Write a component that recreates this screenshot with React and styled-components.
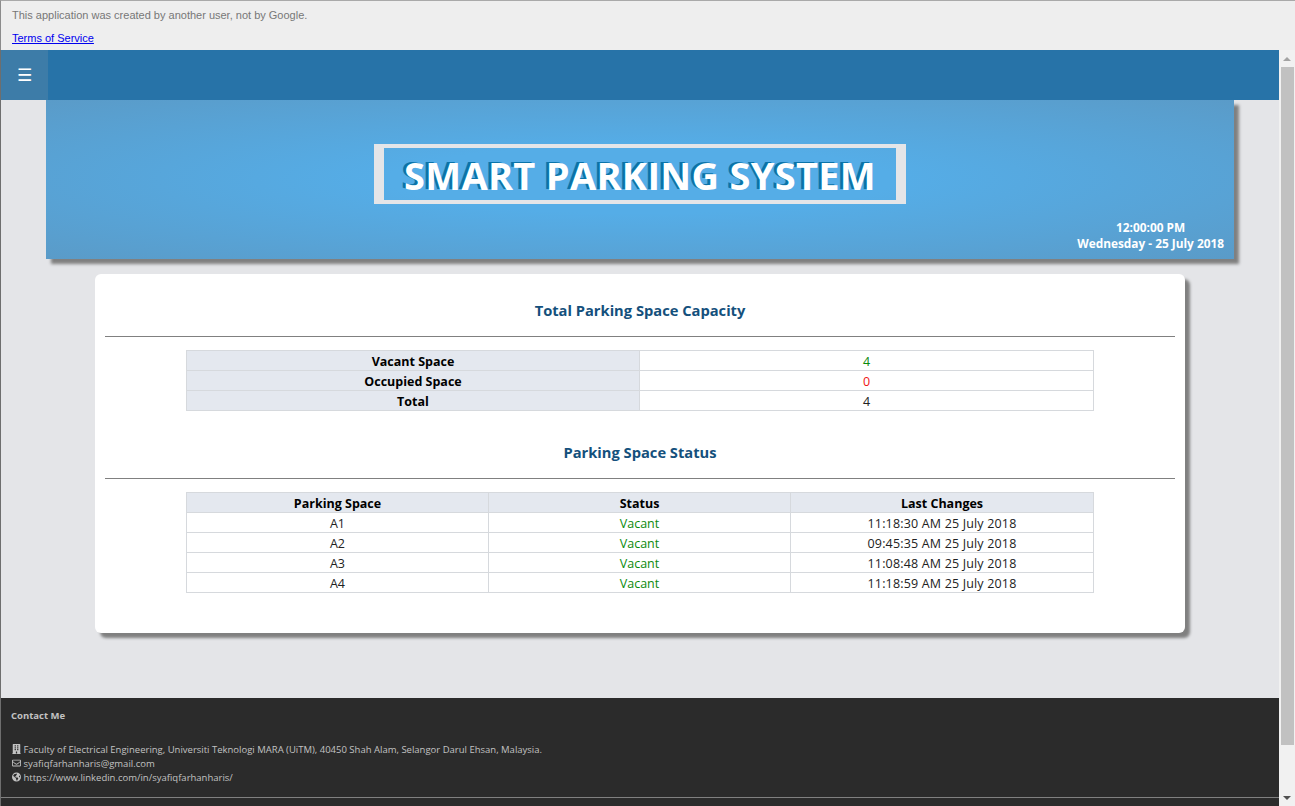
import styled, { createGlobalStyle } from "styled-components";
import { FaBuilding, FaRegEnvelope, FaGlobeAmericas } from "react-icons/fa";

const capacity = [
    { label: "Vacant Space", value: "4", tone: "#0b8a0b" },
    { label: "Occupied Space", value: "0", tone: "#f01414" },
    { label: "Total", value: "4", tone: "#222" },
];

const spaces = [
    { name: "A1", changed: "11:18:30 AM 25 July 2018" },
    { name: "A2", changed: "09:45:35 AM 25 July 2018" },
    { name: "A3", changed: "11:08:48 AM 25 July 2018" },
    { name: "A4", changed: "11:18:59 AM 25 July 2018" },
];

export default function App() {
    return (
        <>
            <GlobalStyle />
            <Shell>
                <Notice>
                    <NoticeText>This application was created by another user, not by Google.</NoticeText>
                    <NoticeLink href="#">Terms of Service</NoticeLink>
                </Notice>
                <Frame>
                    <Page>
                        <TopBar>
                            <MenuButton>☰</MenuButton>
                        </TopBar>
                        <Main>
                            <Header>
                                <TitleBox>SMART PARKING SYSTEM</TitleBox>
                                <Clock>
                                    <div>12:00:00 PM</div>
                                    <div>Wednesday - 25 July 2018</div>
                                </Clock>
                            </Header>
                            <Card>
                                <SectionTitle>Total Parking Space Capacity</SectionTitle>
                                <Rule />
                                <DataTable>
                                    <tbody>
                                        {capacity.map((row) => (
                                            <tr key={row.label}>
                                                <HeadCell $width="452px">{row.label}</HeadCell>
                                                <Cell $tone={row.tone}>{row.value}</Cell>
                                            </tr>
                                        ))}
                                    </tbody>
                                </DataTable>
                                <SectionTitle $second>Parking Space Status</SectionTitle>
                                <Rule />
                                <DataTable>
                                    <thead>
                                        <tr>
                                            <HeadCell $width="301px">Parking Space</HeadCell>
                                            <HeadCell $width="301px">Status</HeadCell>
                                            <HeadCell>Last Changes</HeadCell>
                                        </tr>
                                    </thead>
                                    <tbody>
                                        {spaces.map((space) => (
                                            <tr key={space.name}>
                                                <Cell>{space.name}</Cell>
                                                <Cell $tone="#0b8a0b">Vacant</Cell>
                                                <Cell $spaced>{space.changed}</Cell>
                                            </tr>
                                        ))}
                                    </tbody>
                                </DataTable>
                            </Card>
                        </Main>
                        <Footer>
                            <FooterTitle>Contact Me</FooterTitle>
                            <FooterLine><FaBuilding /> Faculty of Electrical Engineering, Universiti Teknologi MARA (UiTM), 40450 Shah Alam, Selangor Darul Ehsan, Malaysia.</FooterLine>
                            <FooterLine><FaRegEnvelope /> syafiqfarhanharis@gmail.com</FooterLine>
                            <FooterLine><FaGlobeAmericas /> https://www.linkedin.com/in/syafiqfarhanharis/</FooterLine>
                            <FooterRule />
                        </Footer>
                    </Page>
                    <Scrollbar>
                        <Arrow $up />
                        <Track>
                            <Thumb />
                        </Track>
                        <Arrow />
                    </Scrollbar>
                </Frame>
            </Shell>
        </>
    );
}

// STYLING
const GlobalStyle = createGlobalStyle`
    html, body {
        margin: 0;
        height: 100%;
        overflow: hidden;
    }
`;

const Shell = styled.div`
    display: flex;
    flex-direction: column;
    height: 806px;
    overflow: hidden;
    font-family: "Open Sans", sans-serif;
`;

const Notice = styled.div`
    height: 50px;
    box-sizing: border-box;
    flex: none;
    padding: 8px 12px 0 11px;
    background-color: #eeeeee;
    border-top: 1px solid #a9a9a9;
    border-left: 1px solid #8c8c8c;
    font-family: "Liberation Sans", Arial, sans-serif;
    font-size: 11px;
    line-height: 12px;
`;

const NoticeText = styled.div`
    color: #777777;
    margin-bottom: 11px;
`;

const NoticeLink = styled.a`
    color: #0000ee;
`;

const Frame = styled.div`
    display: flex;
    flex: 1;
    min-height: 0;
`;

const Page = styled.div`
    display: flex;
    flex-direction: column;
    width: 1278px;
    flex: none;
    background-color: #e4e5e8;
    border-left: 1px solid #6e6e6e;
`;

const TopBar = styled.div`
    position: relative;
    z-index: 2;
    display: flex;
    flex: none;
    height: 50px;
    background-color: #2773a8;
`;

const MenuButton = styled.div`
    width: 47px;
    display: flex;
    align-items: center;
    justify-content: center;
    color: #ffffff;
    background-color: #3d7ca8;
    font-family: "DejaVu Sans", sans-serif;
    font-size: 17px;
`;

const Main = styled.div`
    flex: 1;
    min-height: 0;
`;

const Header = styled.div`
    display: flex;
    flex-direction: column;
    align-items: center;
    box-sizing: border-box;
    height: 159px;
    margin: 0 45px;
    padding: 44px 10px 0;
    background: radial-gradient(ellipse at center, #55ade7 30%, #5a9bc8 100%);
    box-shadow: 5px 5px 3px #808080;
`;

const TitleBox = styled.div`
    box-sizing: border-box;
    width: 532px;
    height: 60px;
    padding-top: 2px;
    border: solid #e4e5e8;
    border-width: 4px 10px;
    display: flex;
    align-items: center;
    justify-content: center;
    color: #ffffff;
    font-size: 38px;
    font-weight: 700;
    letter-spacing: 0.3px;
    white-space: nowrap;
    text-shadow: -3px -1px 0 #0a73a9;
`;

const Clock = styled.div`
    align-self: flex-end;
    margin-top: 15px;
    color: #ffffff;
    font-size: 11.85px;
    font-weight: 700;
    line-height: 16px;
    text-align: center;
`;

const Card = styled.div`
    box-sizing: border-box;
    height: 359px;
    margin: 15px 94px 0;
    padding: 0 10px;
    background-color: #ffffff;
    border-radius: 6px;
    box-shadow: 5px 5px 3px #808080;
`;

const SectionTitle = styled.h2`
    margin: 0;
    padding-top: ${(props) => (props.$second ? "30px" : "25px")};
    height: 37px;
    color: #14507c;
    font-size: 14.7px;
    font-weight: 700;
    line-height: 22px;
    text-align: center;
`;

const Rule = styled.hr`
    margin: 0 0 13px;
    border: none;
    border-top: 1px solid #808080;
`;

const DataTable = styled.table`
    width: 908px;
    margin: 0 auto;
    border-collapse: collapse;
    table-layout: fixed;
    font-size: 12.5px;
    line-height: 17px;
    text-align: center;
`;

const HeadCell = styled.td`
    width: ${(props) => props.$width || "auto"};
    padding: 2px 0 0;
    border: 1px solid #d6d9dd;
    background-color: #e4e8ef;
    color: #000000;
    font-weight: 700;
`;

const Cell = styled.td`
    padding: 2px 0 0;
    border: 1px solid #d6d9dd;
    color: ${(props) => props.$tone || "#222222"};
    letter-spacing: ${(props) => (props.$spaced ? "0.17px" : "0")};
`;

const Footer = styled.div`
    position: relative;
    flex: none;
    box-sizing: border-box;
    height: 108px;
    padding: 11px 10px 0;
    background-color: #2b2b2b;
    color: #c2c2c2;
    font-size: 9.5px;
    line-height: 14px;

    svg {
        width: 9px;
        height: 10px;
        margin-left: 1px;
        vertical-align: -1px;
    }
`;

const FooterTitle = styled.div`
    font-weight: 700;
    margin-bottom: 20px;
`;

const FooterLine = styled.div`
    white-space: nowrap;
`;

const FooterRule = styled.hr`
    margin: 12px -10px 0;
    border: none;
    border-top: 1px solid #808080;
`;

const Scrollbar = styled.div`
    display: flex;
    flex-direction: column;
    flex: 1;
    background-color: #f1f1f1;
`;

const Arrow = styled.div`
    flex: none;
    height: 17px;
    display: flex;
    align-items: center;
    justify-content: center;

    &::before {
        content: "";
        border-left: 4px solid transparent;
        border-right: 4px solid transparent;
        border-top: ${(props) => (props.$up ? "0" : "4px solid #505050")};
        border-bottom: ${(props) => (props.$up ? "4px solid #a3a3a3" : "0")};
    }
`;

const Track = styled.div`
    flex: 1;
    padding: 0 1px 0 2px;
`;

const Thumb = styled.div`
    height: 678px;
    background-color: #c1c1c1;
`;
